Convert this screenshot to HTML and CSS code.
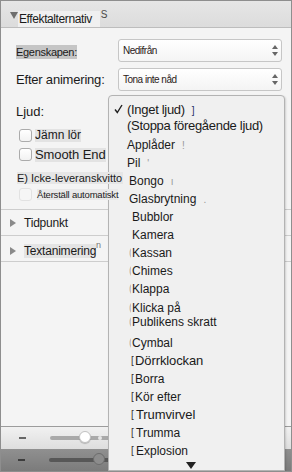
FILE: index.html
```html
<!DOCTYPE html>
<html lang="sv">
<head>
  <meta charset="UTF-8" />
  <title>Effektalternativ</title>
  <link rel="stylesheet" href="styles.css">
</head>
<body>

<div class="pane">
  <div class="pane-head">
    <span class="tri-down"></span>
    <span class="head-label">Effektalternativ</span>
    <span class="head-s">S</span>
  </div>

  <div class="props">
    <div class="field">
      <div class="field-label small"><span class="hl-dark">Egenskapen:</span></div>
      <div class="select">Nedifrån<span class="spin"><i class="up"></i><i class="down"></i></span></div>
    </div>
    <div class="field">
      <div class="field-label">Efter animering:</div>
      <div class="select">Tona inte nåd<span class="spin"><i class="up"></i><i class="down"></i></span></div>
    </div>
    <div class="ljud">Ljud:</div>

    <div class="check first">
      <span class="box"></span><span class="check-label">Jämn lör</span>
    </div>
    <div class="check">
      <span class="box"></span><span class="check-label big">Smooth End</span>
    </div>
    <div class="plain"><span class="over">E) Icke-leveranskvitto</span></div>
    <div class="check faded">
      <span class="box"></span><span class="check-label tiny over">Återställ automatiskt</span>
    </div>
  </div>

  <div class="section"><span class="tri-right"></span><span class="section-label">Tidpunkt</span></div>
  <div class="section low"><span class="tri-right"></span><span class="section-label hl">Textanimering</span><sup class="ghost">n</sup></div>

  <div class="spacer"></div>

  <div class="zoom-bar light">
    <span class="minus"></span>
    <span class="track"><span class="knob"></span><span class="dot"></span></span>
  </div>
  <div class="zoom-bar dark">
    <span class="minus"></span>
    <span class="track"><span class="knob"></span></span>
  </div>

  <ul class="sound-menu">
    <li class="top"><svg class="tick" width="9" height="10" viewBox="0 0 9 10"><path d="M1 5.5 L3.3 8.5 L8 1" fill="none" stroke="#222" stroke-width="1.4"/></svg>(Inget ljud)<span class="tail">]</span></li>
    <li class="top stop">(Stoppa föregående ljud)</li>
    <li class="after-top">Applåder<span class="tail">!</span></li>
    <li>Pil<span class="tail">'</span></li>
    <li class="in1">Bongo<span class="tail">ı</span></li>
    <li class="in1">Glasbrytning<span class="tail">.</span></li>
    <li class="in2">Bubblor</li>
    <li class="in2">Kamera</li>
    <li class="in3"><span class="mark">(</span>Kassan</li>
    <li class="in3"><span class="mark">(</span>Chimes</li>
    <li class="in3"><span class="mark">(</span>Klappa</li>
    <li class="in3 two"><span class="mark">(</span>Klicka på<br><span class="mark">(</span>Publikens skratt</li>
    <li class="in3 after-two"><span class="mark">(</span>Cymbal</li>
    <li class="in4 big"><span class="mark dark">[</span>Dörrklockan</li>
    <li class="in4"><span class="mark dark">[</span>Borra</li>
    <li class="in4"><span class="mark dark">[</span>Kör efter</li>
    <li class="in5 big"><span class="mark dark">[</span>Trumvirvel</li>
    <li class="in5"><span class="mark dark">[</span>Trumma</li>
    <li class="in5"><span class="mark dark">[</span>Explosion</li>
    <li class="more"><span class="tri-more"></span></li>
  </ul>
</div>

</body>
</html>
```

FILE: styles.css
```css
body {
  margin: 0;
  font-family: "Liberation Sans", Arial, sans-serif;
  color: #1a1a1a;
  background: #fff;
}
.pane {
  position: relative;
  width: 292px;
  height: 472px;
  box-sizing: border-box;
  border: 1px solid #8e8e8e;
  background: #f4f4f4;
  display: flex;
  flex-direction: column;
  overflow: hidden;
}

/* header */
.pane-head {
  flex-shrink: 0;
  height: 26px;
  border-bottom: 1px solid #bdbdbd;
  background: linear-gradient(#e6e6e6, #dcdcdc);
  display: flex;
  align-items: flex-end;
  padding-left: 9px;
}
.tri-down {
  width: 0;
  height: 0;
  border-left: 4px solid transparent;
  border-right: 4px solid transparent;
  border-top: 7px solid #6e6e6e;
  margin-bottom: 8px;
}
.head-label {
  background: #f0f0f0;
  font-size: 12px;
  letter-spacing: -0.4px;
  line-height: 16px;
  padding: 0 8px 0 1px;
}
.head-s {
  font-size: 10px;
  color: #4a4a4a;
  align-self: center;
  margin-left: 1px;
}

/* property rows */
.props {
  flex-shrink: 0;
  padding: 11px 0 9px;
}
.field {
  display: flex;
  align-items: center;
  height: 23px;
}
.field + .field {
  margin-top: 6px;
}
.field-label {
  width: 117px;
  box-sizing: border-box;
  padding-left: 15px;
  font-size: 13px;
  letter-spacing: -0.2px;
}
.field-label.small {
  font-size: 11px;
  letter-spacing: -0.3px;
  padding-top: 2px;
}
.hl-dark {
  background: #c5c5c5;
  padding: 1px 0;
}
.select {
  position: relative;
  width: 164px;
  height: 23px;
  box-sizing: border-box;
  border: 1px solid #c6c6c6;
  border-radius: 3px;
  background: linear-gradient(#ffffff, #f4f4f4);
  font-size: 10px;
  letter-spacing: -0.5px;
  padding-left: 4px;
  display: flex;
  align-items: center;
  color: #2a2018;
}
.spin {
  position: absolute;
  right: 3px;
  top: 5px;
  display: flex;
  flex-direction: column;
  gap: 3px;
}
.spin i {
  width: 0;
  height: 0;
  border-left: 3px solid transparent;
  border-right: 3px solid transparent;
}
.spin .up { border-bottom: 4px solid #666; }
.spin .down { border-top: 4px solid #666; }

.ljud {
  margin-top: 13px;
  height: 16px;
  line-height: 16px;
  padding-left: 15px;
  font-size: 13px;
}

.check {
  display: flex;
  align-items: center;
  height: 13px;
  padding-left: 18px;
  margin-top: 6px;
}
.check.first {
  margin-top: 9px;
}
.box {
  width: 13px;
  height: 13px;
  box-sizing: border-box;
  border: 1px solid #ababab;
  border-radius: 3px;
  background: linear-gradient(#ffffff, #f2f2f2);
  flex-shrink: 0;
}
.check-label {
  margin-left: 3px;
  background: #e3e3e3;
  font-size: 12px;
  line-height: 13px;
}
.check-label.big {
  font-size: 13px;
  line-height: 14px;
  letter-spacing: -0.1px;
}
.plain {
  margin-top: 9px;
  height: 16px;
  padding-left: 16px;
  font-size: 11px;
  line-height: 16px;
}
.plain .over {
  background: #e6e6e6;
  padding-right: 1px;
}
.over {
  position: relative;
  z-index: 2;
}
.check.faded {
  margin-top: 2px;
  height: 12px;
}
.check.faded .box {
  border-color: #e2e2e2;
  background: #f6f6f6;
}
.check-label.tiny {
  font-size: 9.5px;
  letter-spacing: -0.2px;
  line-height: 11px;
  background: #e9e9e9;
  margin-left: 5px;
}

/* collapsed sections */
.section {
  flex-shrink: 0;
  height: 25px;
  border-top: 1px solid #cdcdcd;
  display: flex;
  align-items: center;
  padding-left: 9px;
  font-size: 12px;
  letter-spacing: -0.2px;
}
.section.low {
  border-bottom: 1px solid #cdcdcd;
  align-items: flex-end;
  padding-bottom: 3px;
  height: 22px;
}
.tri-right {
  width: 0;
  height: 0;
  border-top: 4px solid transparent;
  border-bottom: 4px solid transparent;
  border-left: 6px solid #8a8a8a;
  margin-right: 8px;
}
.section.low .tri-right {
  margin-bottom: 3px;
}
.section-label.hl {
  background: #e4e4e4;
}
.ghost {
  font-size: 9px;
  color: #777;
  align-self: flex-start;
  margin-top: 4px;
}
.spacer {
  flex: 1;
}

/* zoom bars */
.zoom-bar {
  flex-shrink: 0;
  height: 22px;
  display: flex;
  align-items: center;
}
.zoom-bar.light {
  border-top: 1px solid #9c9c9c;
  background: linear-gradient(#f1f1f1, #dedede);
}
.zoom-bar.dark {
  background: linear-gradient(#909090, #7b7b7b);
}
.minus {
  width: 7px;
  height: 2px;
  background: #666;
  margin-left: 18px;
}
.track {
  position: relative;
  width: 80px;
  height: 4px;
  border-radius: 2px;
  background: #a9a9a9;
  margin-left: 24px;
}
.knob {
  position: absolute;
  left: 29px;
  top: -5px;
  width: 12px;
  height: 12px;
  box-sizing: border-box;
  border-radius: 50%;
  background: #fff;
  border: 1px solid #c2c2c2;
  box-shadow: 0 1px 1px rgba(0, 0, 0, 0.2);
}
.dot {
  position: absolute;
  left: 48px;
  top: 0;
  width: 4px;
  height: 4px;
  border-radius: 50%;
  background: #e6e6e6;
}
.dark .minus {
  background: #3c3c3c;
  margin-left: 17px;
}
.dark .track {
  background: #575757;
}
.dark .knob {
  left: 44px;
  width: 12px;
  height: 12px;
  background: #8c8c8c;
  border-color: #6c6c6c;
  box-shadow: none;
}

/* sound dropdown */
.sound-menu {
  position: absolute;
  left: 107px;
  top: 94px;
  bottom: 0;
  width: 177px;
  box-sizing: border-box;
  margin: 0;
  padding: 6px 0 0;
  list-style: none;
  background: #f0f0f0;
  border: 1px solid #b3b3b3;
  border-radius: 4px 4px 0 0;
  box-shadow: 1px 1px 2px rgba(0, 0, 0, 0.15);
  z-index: 1;
}
.sound-menu li {
  position: relative;
  height: 18px;
  line-height: 18px;
  font-size: 12px;
  padding-left: 18px;
  white-space: nowrap;
}
.sound-menu li.top {
  height: 16px;
  line-height: 16px;
  font-size: 13px;
  letter-spacing: -0.3px;
}
.sound-menu li.stop {
  height: 15px;
  line-height: 15px;
}
.sound-menu li.after-top {
  margin-top: 3px;
}
.tick {
  position: absolute;
  left: 5px;
  top: 2px;
}
.tail {
  font-size: 10px;
  margin-left: 7px;
}
.sound-menu li .tail {
  color: #999;
}
.sound-menu li.top .tail {
  color: #22306a;
}
.sound-menu li.in1 { padding-left: 20px; }
.sound-menu li.in2 { padding-left: 23px; }
.sound-menu li.in3 { padding-left: 20px; }
.sound-menu li.in4 { padding-left: 22px; }
.sound-menu li.in5 { padding-left: 22px; }
.sound-menu li.big {
  font-size: 13px;
  letter-spacing: -0.1px;
}
.sound-menu li.two {
  height: 28px;
  line-height: 14px;
  margin-top: 3px;
}
.sound-menu li.after-two {
  margin-top: 5px;
}
.mark {
  display: inline-block;
  vertical-align: top;
  width: 2px;
  margin-right: 1px;
  font-size: 10px;
  color: #a8a8a8;
  overflow: hidden;
}
.mark.dark {
  width: 3px;
  color: #333;
}
.in5 .mark.dark {
  width: 4px;
}
.sound-menu li.more {
  height: 10px;
  display: flex;
  justify-content: center;
  padding: 0 12px 0 0;
}
.tri-more {
  width: 0;
  height: 0;
  margin-top: 2px;
  border-left: 5px solid transparent;
  border-right: 5px solid transparent;
  border-top: 7px solid #222;
}
```
